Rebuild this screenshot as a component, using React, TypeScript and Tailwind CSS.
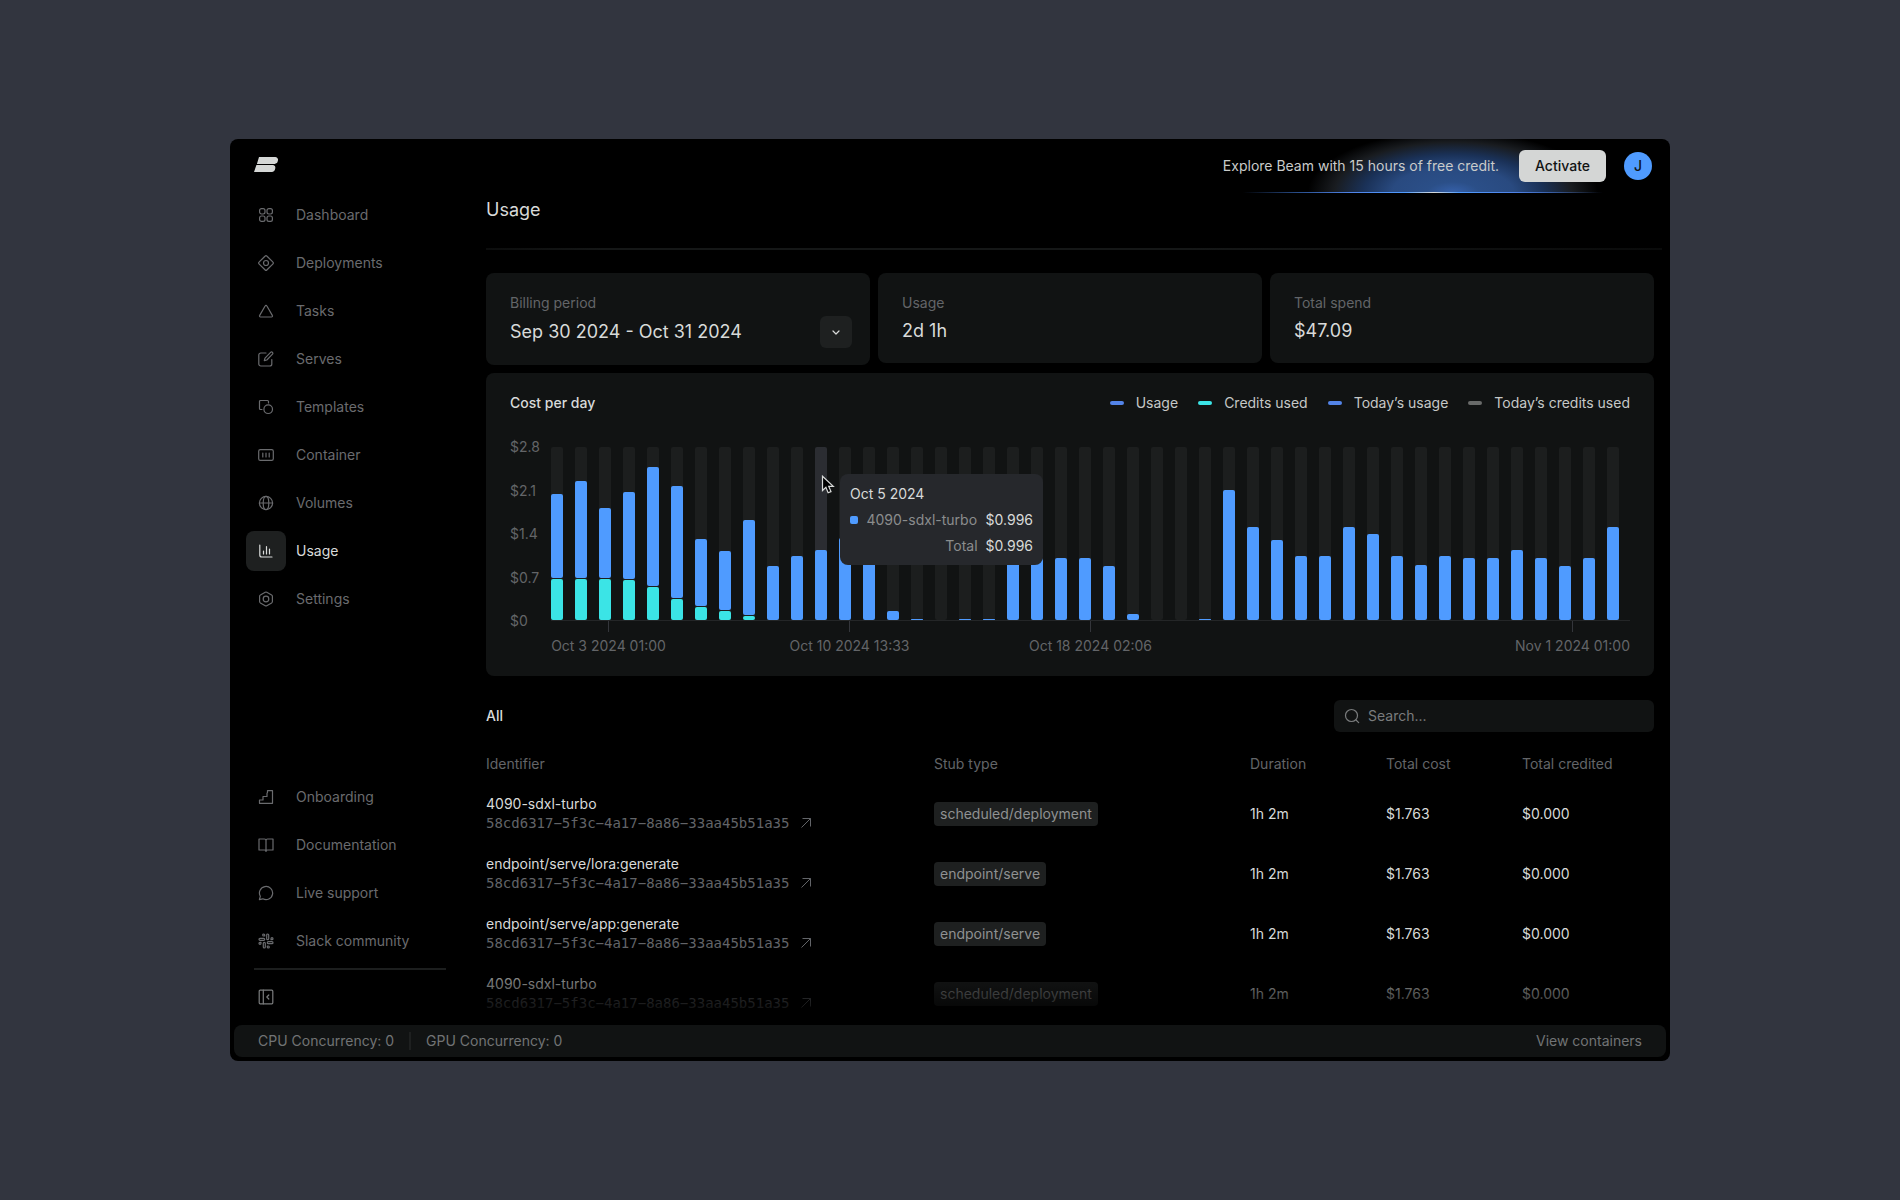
import { useState } from 'react';
import type { ReactNode } from 'react';

interface NavItem {
  label: string;
  icon: ReactNode;
}

interface DayCost {
  usage: number;
  credits?: number;
}

interface UsageRow {
  name: string;
  stub: string;
}

const Icon = ({ children, className = '' }: { children: ReactNode; className?: string }) => (
  <svg
    viewBox="0 0 16 16"
    fill="none"
    stroke="currentColor"
    strokeWidth="1.2"
    strokeLinecap="round"
    strokeLinejoin="round"
    aria-hidden="true"
    className={`size-4 shrink-0 ${className}`}
  >
    {children}
  </svg>
);

const mainNav: NavItem[] = [
  {
    label: 'Dashboard',
    icon: (
      <Icon>
        <rect x="1.6" y="1.6" width="5.4" height="5.4" rx="1.9" />
        <rect x="9" y="1.6" width="5.4" height="5.4" rx="1.9" />
        <rect x="1.6" y="9" width="5.4" height="5.4" rx="1.9" />
        <rect x="9" y="9" width="5.4" height="5.4" rx="1.9" />
      </Icon>
    ),
  },
  {
    label: 'Deployments',
    icon: (
      <Icon>
        <path d="M7.2 1 1 7.2a1.1 1.1 0 0 0 0 1.6L7.2 15a1.1 1.1 0 0 0 1.6 0L15 8.8a1.1 1.1 0 0 0 0-1.6L8.8 1a1.1 1.1 0 0 0-1.6 0Z" />
        <circle cx="8" cy="8" r="2.5" />
      </Icon>
    ),
  },
  {
    label: 'Tasks',
    icon: (
      <Icon>
        <path d="M7.1 3 1.7 12.4a1 1 0 0 0 .9 1.6h10.8a1 1 0 0 0 .9-1.6L8.9 3a1 1 0 0 0-1.8 0Z" />
      </Icon>
    ),
  },
  {
    label: 'Serves',
    icon: (
      <Icon>
        <path d="M8 2H2.8A2 2 0 0 0 .8 4v9a2 2 0 0 0 2 2h9a2 2 0 0 0 2-2V8.5" />
        <path d="M12.6 1.3a1.3 1.3 0 0 1 1.9 1.9L8.8 9l-2.5.7.7-2.5Z" />
      </Icon>
    ),
  },
  {
    label: 'Templates',
    icon: (
      <Icon>
        <path d="M4 10.5H2.5a1 1 0 0 1-1-1v-7a1 1 0 0 1 1-1h7a1 1 0 0 1 1 1V4" />
        <circle cx="10.2" cy="10.2" r="4.3" />
      </Icon>
    ),
  },
  {
    label: 'Container',
    icon: (
      <Icon>
        <rect x=".7" y="2.7" width="14.6" height="10.6" rx="1.6" />
        <path d="M4.8 6v4M8 6v4M11.2 6v4" />
      </Icon>
    ),
  },
  {
    label: 'Volumes',
    icon: (
      <Icon>
        <circle cx="8" cy="8" r="6.6" />
        <ellipse cx="8" cy="8" rx="2.8" ry="6.6" />
        <path d="M1.4 8h13.2" />
      </Icon>
    ),
  },
  {
    label: 'Usage',
    icon: (
      <Icon>
        <path d="M1.8 2v10a2 2 0 0 0 2 2H14M5.5 11V8M8.5 11V3.5M11.5 11V6" />
      </Icon>
    ),
  },
  {
    label: 'Settings',
    icon: (
      <Icon>
        <path d="M7.2 1.3 2.4 4a1.5 1.5 0 0 0-.8 1.4v5.2c0 .6.3 1.1.8 1.4l4.8 2.7c.5.3 1.1.3 1.6 0l4.8-2.7c.5-.3.8-.8.8-1.4V5.4c0-.6-.3-1.1-.8-1.4L8.8 1.3a1.6 1.6 0 0 0-1.6 0Z" />
        <circle cx="8" cy="8" r="2.8" />
      </Icon>
    ),
  },
];

const helpNav: NavItem[] = [
  {
    label: 'Onboarding',
    icon: (
      <Icon>
        <path d="M1.5 14.3V11H5V7.5h4V4.5c0-.5.2-.8.5-1L9.5 1.7h5v12.6Z" />
      </Icon>
    ),
  },
  {
    label: 'Documentation',
    icon: (
      <Icon>
        <path d="M8 3.5A1.5 1.5 0 0 0 6.5 2H1v11h5.5A1.5 1.5 0 0 1 8 14.5ZM8 3.5A1.5 1.5 0 0 1 9.5 2H15v11H9.5A1.5 1.5 0 0 0 8 14.5" />
      </Icon>
    ),
  },
  {
    label: 'Live support',
    icon: (
      <Icon>
        <path d="M1.4 14.6l.9-3.3A6.6 6.6 0 1 1 4.8 13.8Z" />
      </Icon>
    ),
  },
  {
    label: 'Slack community',
    icon: (
      <Icon>
        <rect x="8.7" y="1" width="2" height="5.7" rx="1" />
        <rect x="5.3" y="9.3" width="2" height="5.7" rx="1" />
        <rect x="1" y="5.3" width="5.7" height="2" rx="1" />
        <rect x="9.3" y="8.7" width="5.7" height="2" rx="1" />
        <path d="M13 6.7v-1a1 1 0 1 1 1 1ZM3 9.3v1a1 1 0 1 1-1-1ZM6.7 3h-1a1 1 0 1 1 1-1ZM9.3 13h1a1 1 0 1 1-1 1Z" />
      </Icon>
    ),
  },
];

const legend = [
  { label: 'Usage', color: 'bg-[#5384e8]' },
  { label: 'Credits used', color: 'bg-[#3be4e6]' },
  { label: 'Today’s usage', color: 'bg-[#5384e8]' },
  { label: 'Today’s credits used', color: 'bg-[#696b6a]' },
];

const yLabels = ['$2.8', '$2.1', '$1.4', '$0.7', '$0'];
const xLabels = ['Oct 3 2024 01:00', 'Oct 10 2024 13:33', 'Oct 18 2024 02:06', '', 'Nov 1 2024 01:00'];

// Cost in dollars for each day, credits are drawn at the foot of the bar
const days: DayCost[] = [
  { usage: 1.35, credits: 0.67 },
  { usage: 1.56, credits: 0.67 },
  { usage: 1.13, credits: 0.67 },
  { usage: 1.4, credits: 0.65 },
  { usage: 1.93, credits: 0.53 },
  { usage: 1.82, credits: 0.34 },
  { usage: 1.08, credits: 0.21 },
  { usage: 0.95, credits: 0.15 },
  { usage: 1.55, credits: 0.06 },
  { usage: 0.87 },
  { usage: 1.03 },
  { usage: 1.14 },
  { usage: 1.33 },
  { usage: 1.1 },
  { usage: 0.14 },
  { usage: 0.016 },
  { usage: 0 },
  { usage: 0.016 },
  { usage: 0.016 },
  { usage: 1.01 },
  { usage: 1.01 },
  { usage: 1.01 },
  { usage: 1.01 },
  { usage: 0.87 },
  { usage: 0.1 },
  { usage: 0 },
  { usage: 0 },
  { usage: 0.016 },
  { usage: 2.1 },
  { usage: 1.51 },
  { usage: 1.3 },
  { usage: 1.03 },
  { usage: 1.03 },
  { usage: 1.51 },
  { usage: 1.4 },
  { usage: 1.03 },
  { usage: 0.89 },
  { usage: 1.03 },
  { usage: 1.01 },
  { usage: 1.01 },
  { usage: 1.14 },
  { usage: 1.01 },
  { usage: 0.87 },
  { usage: 1.01 },
  { usage: 1.51 },
];

const MAX_COST = 2.8;
const HOVERED_DAY = 11;

const rows: UsageRow[] = [
  { name: '4090-sdxl-turbo', stub: 'scheduled/deployment' },
  { name: 'endpoint/serve/lora:generate', stub: 'endpoint/serve' },
  { name: 'endpoint/serve/app:generate', stub: 'endpoint/serve' },
  { name: '4090-sdxl-turbo', stub: 'scheduled/deployment' },
];

const NavList = ({
  items,
  active,
  onSelect,
}: {
  items: NavItem[];
  active: string;
  onSelect: (label: string) => void;
}) => (
  <ul className="flex flex-col gap-2">
    {items.map((item) => {
      const isActive = item.label === active;
      return (
        <li key={item.label}>
          <a
            href="#"
            onClick={(e) => {
              e.preventDefault();
              onSelect(item.label);
            }}
            className={`flex items-center gap-[10px] ${isActive ? 'text-[#d8dad9]' : 'text-[#6a6b6e]'}`}
          >
            <span
              className={`flex size-10 items-center justify-center rounded-lg ${isActive ? 'bg-[#1e2020]' : ''}`}
            >
              {item.icon}
            </span>
            {item.label}
          </a>
        </li>
      );
    })}
  </ul>
);

const StatCard = ({ label, value }: { label: string; value: string }) => (
  <div className="flex h-[90px] flex-col gap-1 rounded-lg bg-[#111313] p-5 pl-6">
    <span className="text-[#636568]">{label}</span>
    <span className="text-lg leading-7 text-[#d8dad9]">{value}</span>
  </div>
);

const Tooltip = () => (
  <div className="absolute top-[27px] left-[289px] flex w-[203px] flex-col gap-1 rounded-lg bg-[#26282c] px-[10px] pt-[9px] pb-2 leading-[22px]">
    <span className="text-[#d8dad9]">Oct 5 2024</span>
    <div className="flex items-center justify-between text-[#8b8d8e]">
      <span className="size-2 rounded-xs bg-[#4f9bff]" />
      4090-sdxl-turbo
      <span className="text-[#d8dad9]">$0.996</span>
    </div>
    <div className="flex justify-end gap-2 text-[#8b8d8e]">
      Total
      <span className="text-[#d8dad9]">$0.996</span>
    </div>
  </div>
);

const CostChart = () => (
  <section className="rounded-lg bg-[#111313] px-6 py-5">
    <div className="flex items-center justify-between">
      <h2 className="font-medium text-[#d8dad9]">Cost per day</h2>
      <ul className="flex gap-5">
        {legend.map((entry) => (
          <li key={entry.label} className="flex items-center gap-3 text-[#c6c8c7]">
            <span className={`h-1 w-[14px] rounded-xs ${entry.color}`} />
            {entry.label}
          </li>
        ))}
      </ul>
    </div>

    <div className="mt-[34px] flex">
      <div className="-my-[10px] flex w-[41px] flex-col justify-between text-[#636568]">
        {yLabels.map((label) => (
          <span key={label}>{label}</span>
        ))}
      </div>
      <div className="relative flex h-[174px] flex-1 gap-3 border-b border-[#242627] pr-[11px]">
        {days.map((day, i) => (
          <div
            key={i}
            className={`flex flex-1 flex-col justify-end gap-px rounded-xs ${i === HOVERED_DAY ? 'bg-[#2b2d32]' : 'bg-[#1c1e1e]'}`}
          >
            <div
              className="rounded-xs bg-[#4f9bff]"
              style={{ height: `${(day.usage / MAX_COST) * 100}%` }}
            />
            {day.credits && (
              <div
                className="rounded-xs bg-[#3be4e6]"
                style={{ height: `${(day.credits / MAX_COST) * 100}%` }}
              />
            )}
          </div>
        ))}
        <Tooltip />
        <svg viewBox="0 0 14 20" className="absolute top-[28px] left-[270px] h-5 w-[14px]" aria-hidden="true">
          <path
            d="M1.5 1.2v14.3l3.4-3.2 2.2 5.5 2.9-1.2-2.3-5.3h4.6Z"
            fill="#000"
            stroke="#d8dad9"
            strokeWidth="1.2"
          />
        </svg>
      </div>
    </div>

    <div className="flex justify-between pl-[41px] text-[#636568]">
      {xLabels.map((label, i) => (
        <div key={i} className="flex w-[115px] flex-col items-center gap-1 whitespace-nowrap">
          <span className={`h-[11px] w-px ${label ? 'bg-[#34363b]' : ''}`} />
          {label}
        </div>
      ))}
    </div>
  </section>
);

const UsageTable = () => (
  <table className="w-full table-fixed text-left">
    <thead>
      <tr className="h-10 text-[#636568]">
        <th className="font-normal">Identifier</th>
        <th className="w-[316px] font-normal">Stub type</th>
        <th className="w-[136px] font-normal">Duration</th>
        <th className="w-[136px] font-normal">Total cost</th>
        <th className="w-[132px] font-normal">Total credited</th>
      </tr>
    </thead>
    <tbody>
      {rows.map((row, i) => (
        <tr key={i} className="h-[60px] text-[#d8dad9]">
          <td>
            <div className="flex flex-col gap-px pb-[2px] leading-[19px]">
              {row.name}
              <a href="#" className="flex items-center gap-3 font-['DejaVu_Sans_Mono',monospace] text-[#626468]">
                58cd6317−5f3c−4a17−8a86−33aa45b51a35
                <svg viewBox="0 0 10 10" className="size-[10px]" fill="none" stroke="currentColor" aria-hidden="true">
                  <path d="M.5 9.5l9-9M1.5.5h8v8" />
                </svg>
              </a>
            </div>
          </td>
          <td>
            <span className="inline-block rounded-sm bg-[#1e2020] px-[6px] leading-6 text-[#8f9192]">{row.stub}</span>
          </td>
          <td>1h 2m</td>
          <td>$1.763</td>
          <td>$0.000</td>
        </tr>
      ))}
    </tbody>
  </table>
);

const App = () => {
  const [active, setActive] = useState('Usage');
  const [query, setQuery] = useState('');

  return (
    <div className="flex min-h-screen items-start justify-center bg-[#32353f] px-[230px] pt-[139px] pb-[137px] font-['Inter',sans-serif] text-sm leading-5">
      <div className="flex w-full max-w-[1440px] flex-col overflow-hidden rounded-lg bg-black">
        {/* Header */}
        <header className="flex h-[54px] items-center justify-between pr-[18px] pl-6">
          <svg viewBox="0 0 24 15" className="mb-1 h-[15px] w-6" fill="#d5d7d6" aria-label="Beam">
            <path d="M5 0h16.2a2.8 2.8 0 0 1 2.8 3.2l-.2.9A3.3 3.3 0 0 1 20.6 6.9H2.9Z" />
            <path d="M2.4 8h16.4a2.6 2.6 0 0 1 2.5 3.2l-.2.9A3.5 3.5 0 0 1 17.8 15H0Z" />
          </svg>
          <div className="relative flex h-full items-center">
            {/* Glow behind the promo text */}
            <div className="absolute inset-y-0 left-[80px] w-[300px] bg-[radial-gradient(ellipse_145px_62px_at_50%_100%,#3661ab_0%,#2b4f88_18%,#294a80_42%,#1a3157_62%,#191c20_82%,transparent_100%)]" />
            <div className="absolute bottom-0 left-5 h-px w-[360px] bg-[linear-gradient(to_right,transparent,#2b5191_16%,#4f83e8_30%,#4f9bff_45%,#d8dad9_53%,#4f9bff_60%,#4f83e8_75%,transparent)]" />
            <span className="relative text-[#c9cbca]">Explore Beam with 15 hours of free credit.</span>
            <button
              type="button"
              className="relative ml-5 h-8 rounded-md bg-[#d4d6d5] px-4 font-medium text-[#111313]"
            >
              Activate
            </button>
            <button
              type="button"
              className="relative ml-[18px] size-7 rounded-full bg-[#4f9bff] font-medium text-[#111313]"
            >
              J
            </button>
          </div>
        </header>

        <div className="flex">
          {/* Sidebar */}
          <nav className="flex w-[256px] shrink-0 flex-col pt-[2px] pr-10 pl-4">
            <NavList items={mainNav} active={active} onSelect={setActive} />
            <div className="mt-auto">
              <NavList items={helpNav} active={active} onSelect={setActive} />
              <hr className="mt-[7px] ml-2 border-t-2 border-[#1c1e1e]" />
              <button
                type="button"
                aria-label="Collapse sidebar"
                className="mt-[7px] mb-2 flex size-10 items-center justify-center text-[#7a7c7d]"
              >
                <Icon>
                  <rect x="1.2" y="1.2" width="13.6" height="13.6" rx="1" />
                  <path d="M5.3 1.2v13.6M10.8 6 8.8 8l2 2" />
                </Icon>
              </button>
            </div>
          </nav>

          {/* Content */}
          <main className="relative min-w-0 flex-1 pr-4 pb-px">
            <h1 className="pt-[3px] text-lg leading-7 text-[#d8dad9]">Usage</h1>
            <div className="mt-6 -mr-2 h-[2px] bg-[linear-gradient(to_right,#0c0d0d,#151717_10%,#151717_60%,#0a0b0b)]" />

            <div className="mt-[23px] grid grid-cols-3 items-start gap-2">
              <div className="flex h-[92px] items-end justify-between rounded-lg bg-[#111313] pr-[18px] pb-[17px] pl-6">
                <div className="flex flex-col gap-[5px] pb-[2px]">
                  <span className="text-[#636568]">Billing period</span>
                  <span className="text-lg leading-7 text-[#d8dad9]">Sep 30 2024 - Oct 31 2024</span>
                </div>
                <button
                  type="button"
                  aria-label="Choose billing period"
                  className="flex size-8 items-center justify-center rounded-md bg-[#1e2020] text-[#d8dad9]"
                >
                  <Icon>
                    <path d="m5 7 3 3 3-3" />
                  </Icon>
                </button>
              </div>
              <StatCard label="Usage" value="2d 1h" />
              <StatCard label="Total spend" value="$47.09" />
            </div>

            <div className="mt-2">
              <CostChart />
            </div>

            <div className="mt-6 flex h-8 items-center justify-between">
              <h2 className="font-medium text-[#d8dad9]">All</h2>
              <label className="flex h-8 w-[320px] items-center gap-2 rounded-md bg-[#111313] px-[10px] text-[#7a7c7d]">
                <Icon>
                  <circle cx="7.5" cy="7.5" r="6" />
                  <path d="m12 12 2.7 2.7" />
                </Icon>
                <input
                  type="text"
                  aria-label="Search"
                  value={query}
                  onChange={(e) => setQuery(e.target.value)}
                  placeholder="Search..."
                  className="min-w-0 flex-1 bg-transparent outline-none placeholder:text-[#7a7c7d]"
                />
              </label>
            </div>

            <div className="mt-3">
              <UsageTable />
            </div>
            {/* Fades out the rows that run under the status bar */}
            <div className="pointer-events-none absolute inset-x-0 bottom-0 h-[76px] bg-linear-to-b from-transparent to-black" />
          </main>
        </div>

        {/* Status bar */}
        <footer className="mx-1 mb-1 flex h-8 items-center rounded-lg bg-[#111313] px-6 text-[#717375]">
          <span>CPU Concurrency: 0</span>
          <span className="mx-[15px] h-[18px] w-[2px] bg-[#1e2020]" />
          <span>GPU Concurrency: 0</span>
          <a href="#" className="ml-auto">
            View containers
          </a>
        </footer>
      </div>
    </div>
  );
};

export default App;
